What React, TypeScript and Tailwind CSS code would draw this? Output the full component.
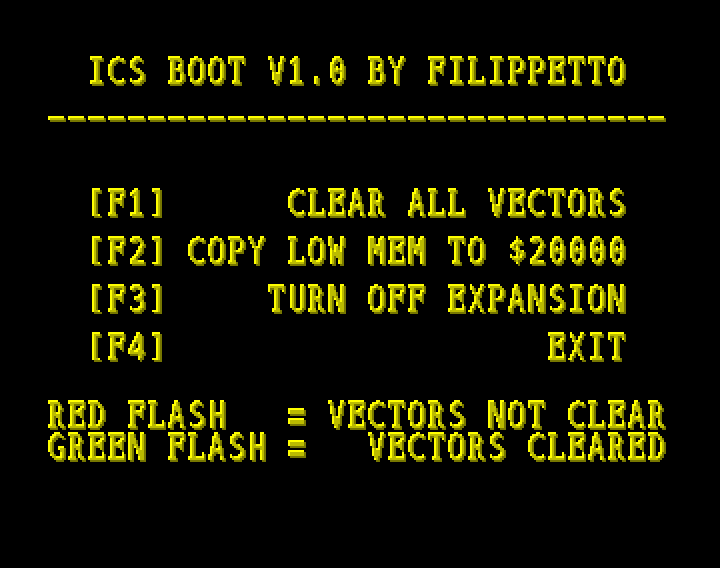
import { useMemo } from "react";

type Box = [left: number, right: number, top: number, bottom: number];

const LINES = [
  { text: "  ICS BOOT V1.0 BY FILIPPETTO", gap: "mt-0" },
  { text: "-------------------------------", gap: "mt-[18px]" },
  { text: "  [F1]      CLEAR ALL VECTORS", gap: "mt-[54px]" },
  { text: "  [F2] COPY LOW MEM TO $20000", gap: "mt-[18px]" },
  { text: "  [F3]     TURN OFF EXPANSION", gap: "mt-[18px]" },
  { text: "  [F4]                   EXIT", gap: "mt-[18px]" },
  { text: "RED FLASH   = VECTORS NOT CLEAR", gap: "mt-[38px]" },
  { text: "GREEN FLASH =   VECTORS CLEARED", gap: "mt-[2px]" },
];

const SIZE = 36;
const SERIF = "EFLTBPRDI1";
const HEAVY = "AVNMW0S234$";

// Ink area of each character inside its 20 x 30 cell.
function inkBox(ch: string): Box {
  if (ch === ".") return [5.6, 10.4, 19.6, 28.4];
  if (ch === "-") return [-0.4, 16.4, 11.6, 16.4];
  if (ch === "=") return [-0.4, 16.4, 7.6, 24.4];
  if (ch === "[" || ch === "]") return [3.8, 12.2, -0.2, 28.2];
  if (ch === "I" || ch === "1") return [2, 14, 0, 28];
  if ("S023$UH".includes(ch)) return [2, 16, 0, 28];
  return [0, 16, 0, 28];
}

function strokeOf(ch: string) {
  if (ch === "I" || ch === "1") return 1.6;
  if ("EFBPR".includes(ch)) return 1.7;
  if (SERIF.includes(ch)) return 2;
  if (HEAVY.includes(ch)) return 1.4;
  if (ch === "[" || ch === "]" || ch === "=") return 0.9;
  if (ch === "." || ch === "-") return 0;
  return 0.8;
}

function fit(ctx: CanvasRenderingContext2D, ch: string) {
  const family = SERIF.includes(ch) ? '"DejaVu Serif"' : '"DejaVu Sans Mono"';
  const stroke = strokeOf(ch);
  const pad = stroke / 2;
  ctx.font = `400 ${SIZE * 10}px ${family}`;
  const m = ctx.measureText(ch);
  const left = -m.actualBoundingBoxLeft / 10 - pad;
  const right = m.actualBoundingBoxRight / 10 + pad;
  const up = m.actualBoundingBoxAscent / 10 + pad;
  const down = m.actualBoundingBoxDescent / 10 + pad;
  const ascent = Math.round(m.fontBoundingBoxAscent / 10);
  const descent = Math.round(m.fontBoundingBoxDescent / 10);
  const baseline = (SIZE - ascent - descent) / 2 + ascent;
  const [x0, x1, y0, y1] = inkBox(ch);
  const sx = (x1 - x0) / (right - left);
  const sy = (y1 - y0) / (up + down);
  return {
    fontFamily: `${family}, monospace`,
    WebkitTextStroke: `${stroke}px #bbbb00`,
    transform: `translate(${x0 - left * sx}px, ${y0 - (baseline - up) * sy}px) scale(${sx}, ${sy})`,
  };
}

function Line({ text, gap, ctx }: { text: string; gap: string; ctx: CanvasRenderingContext2D }) {
  return (
    <div className={`flex h-[30px] ${gap}`}>
      {Array.from(text).map((ch, i) => (
        <span key={i} className="block h-[30px] w-[20px] shrink-0 whitespace-pre">
          {ch === " " ? (
            " "
          ) : (
            <span className="block w-max origin-top-left text-[36px] leading-[36px]" style={fit(ctx, ch)}>
              {ch}
            </span>
          )}
        </span>
      ))}
    </div>
  );
}

function PixelFilter() {
  return (
    <svg className="absolute h-0 w-0" aria-hidden="true">
      <filter id="pixels" filterUnits="userSpaceOnUse" x="0" y="0" width="720" height="568" colorInterpolationFilters="sRGB">
        <feConvolveMatrix in="SourceAlpha" order="2" kernelMatrix="1 1 1 1" divisor="4" targetX="0" targetY="0" edgeMode="none" result="mean" />
        <feFlood x="0" y="0" width="1" height="1" floodColor="#fff" />
        <feComposite x="0" y="0" width="2" height="2" in2="SourceAlpha" operator="arithmetic" k1="0" k2="1" k3="0" k4="0" />
        <feTile x="0" y="0" width="720" height="568" result="grid" />
        <feComposite in="mean" in2="grid" operator="in" />
        <feComponentTransfer result="a">
          <feFuncA type="discrete" tableValues="0 0 0 0 0 1 1 1 1 1" />
        </feComponentTransfer>
        <feOffset in="a" dx="1" dy="0" result="b" />
        <feMerge result="ab">
          <feMergeNode in="a" />
          <feMergeNode in="b" />
        </feMerge>
        <feOffset in="ab" dx="0" dy="1" result="cd" />
        <feMerge result="block">
          <feMergeNode in="ab" />
          <feMergeNode in="cd" />
        </feMerge>
        <feOffset in="block" dx="2" dy="2" result="shifted" />
        <feComposite in="block" in2="shifted" operator="in" result="overlap" />
        <feFlood floodColor="#777700" />
        <feComposite in2="shifted" operator="in" result="dark" />
        <feFlood floodColor="#ffff00" />
        <feComposite in2="block" operator="in" result="light" />
        <feFlood floodColor="#bbbb00" />
        <feComposite in2="overlap" operator="in" result="mid" />
        <feMerge>
          <feMergeNode in="dark" />
          <feMergeNode in="light" />
          <feMergeNode in="mid" />
        </feMerge>
      </filter>
    </svg>
  );
}

export default function App() {
  const ctx = useMemo(() => document.createElement("canvas").getContext("2d")!, []);
  return (
    <main className="h-[568px] w-[720px] overflow-hidden bg-black">
      <PixelFilter />
      <div className="flex h-[568px] w-[720px] flex-col pt-[56px] pl-[48px] text-[#bbbb00] [filter:url(#pixels)]">
        {LINES.map((line, i) => (
          <Line key={i} text={line.text} gap={line.gap} ctx={ctx} />
        ))}
      </div>
    </main>
  );
}
